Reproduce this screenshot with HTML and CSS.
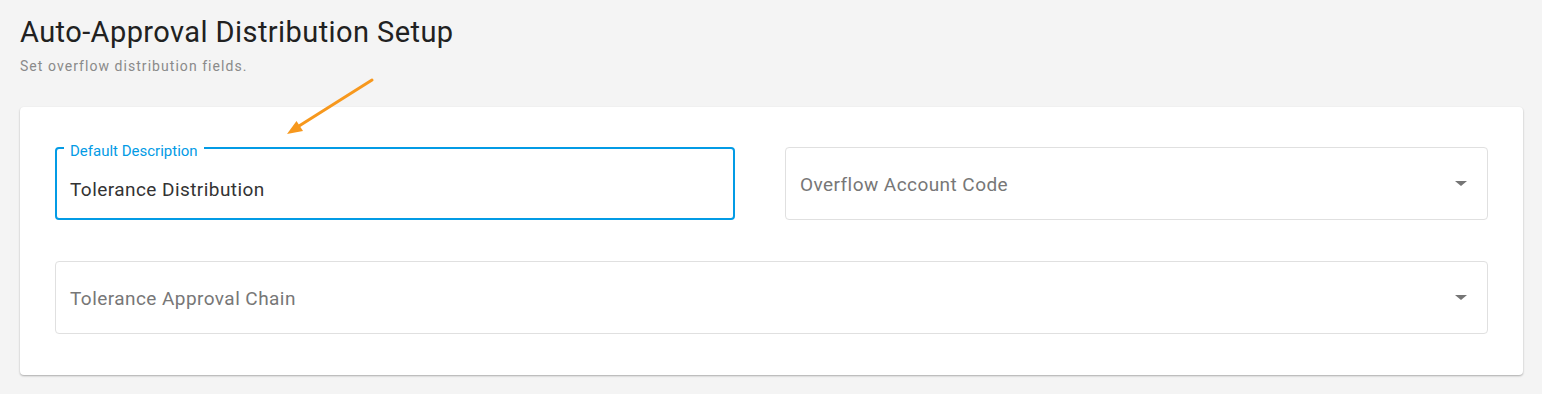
FILE: index.html
```html
<!DOCTYPE html>
<html lang="en">
<head>
    <meta charset="UTF-8">
    <title>Auto-Approval Distribution Setup</title>
    <link rel="stylesheet" href="styles.css">
</head>
<body>
    <div class="page">
        <h1>Auto-Approval Distribution Setup</h1>
        <p class="subtitle">Set overflow distribution fields.</p>

        <div class="card">
            <div class="field focused">
                <label class="field-label">Default Description</label>
                <div class="field-value">Tolerance Distribution</div>
            </div>
            <div class="field select">
                <span class="placeholder">Overflow Account Code</span>
                <span class="caret"></span>
            </div>
            <div class="field select wide">
                <span class="placeholder">Tolerance Approval Chain</span>
                <span class="caret"></span>
            </div>
        </div>

        <!-- callout arrow pointing at the focused field -->
        <svg class="callout" width="100" height="70" viewBox="280 72 100 70">
            <line x1="372" y1="80" x2="299" y2="126" stroke="#f7981d" stroke-width="3" stroke-linecap="round"/>
            <polygon points="287,134 303,131 296.5,121" fill="#f7981d"/>
        </svg>
    </div>
</body>
</html>
```

FILE: styles.css
```css
body {
    margin: 0;
    background: #f4f4f4;
    font-family: Roboto, "Noto Sans", Arial, sans-serif;
}
.page {
    position: relative;
    padding: 14px 19px 20px 20px;
}
h1 {
    margin: 0;
    font-size: 29px;
    line-height: 36px;
    font-weight: 400;
    letter-spacing: 0.42px;
    color: #212121;
}
.subtitle {
    margin: 7px 0 0;
    font-size: 14px;
    line-height: 18px;
    letter-spacing: 1.05px;
    color: #8a8a8a;
}
.card {
    margin-top: 32px;
    background: #fff;
    border-radius: 4px;
    box-shadow: 0 1px 2px rgba(0, 0, 0, 0.3);
    padding: 40px 35px 41px;
    display: grid;
    grid-template-columns: 680px 1fr;
    column-gap: 50px;
    row-gap: 41px;
}
.field {
    position: relative;
    height: 73px;
    box-sizing: border-box;
    border: 1px solid #e0e0e0;
    border-radius: 4px;
    font-size: 19px;
    line-height: 24px;
    letter-spacing: 0.44px;
}
.field.wide {
    grid-column: 1 / 3;
}
.field.focused {
    border: 2px solid #039be5;
    padding: 29px 13px 0;
}
.field-label {
    position: absolute;
    top: -7px;
    left: 7px;
    padding: 0 6px;
    background: #fff;
    font-size: 15px;
    line-height: 18px;
    letter-spacing: 0;
    color: #039be5;
}
.field-value {
    color: #333;
}
.field.select {
    display: flex;
    align-items: center;
    justify-content: space-between;
    padding: 3px 20px 0 14px;
}
.placeholder {
    color: #777;
}
.caret {
    width: 0;
    height: 0;
    border-left: 6px solid transparent;
    border-right: 6px solid transparent;
    border-top: 5px solid #757575;
    margin-top: -3px;
}
.callout {
    position: absolute;
    left: 280px;
    top: 72px;
}
```
